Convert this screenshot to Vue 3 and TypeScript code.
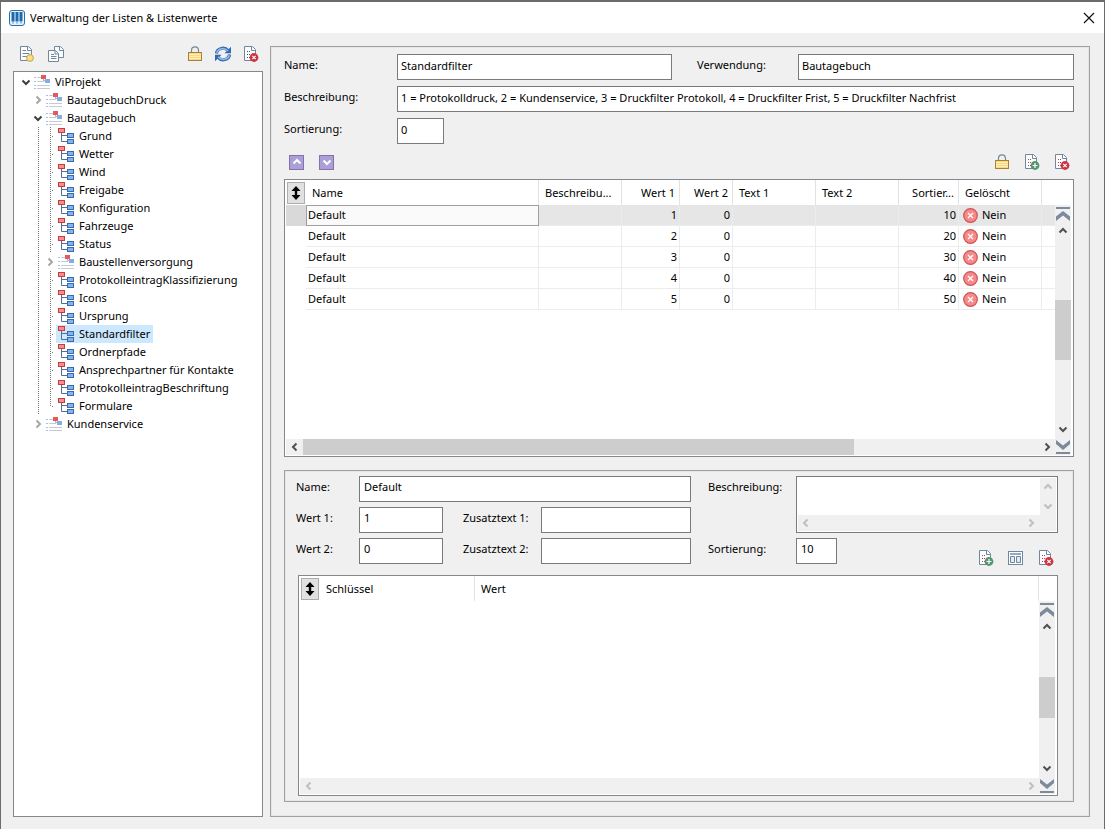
<script setup lang="ts">
import { computed, defineComponent, h, ref } from 'vue'

interface TreeNode {
  label: string
  level: number
  kind: 'group' | 'list'
  open?: boolean
}

interface ValueRow {
  name: string
  wert1: number
  wert2: number
  sort: number
  deleted: string
}

const nodes = ref<TreeNode[]>([
  { label: 'ViProjekt', level: 0, kind: 'group', open: true },
  { label: 'BautagebuchDruck', level: 1, kind: 'group', open: false },
  { label: 'Bautagebuch', level: 1, kind: 'group', open: true },
  { label: 'Grund', level: 2, kind: 'list' },
  { label: 'Wetter', level: 2, kind: 'list' },
  { label: 'Wind', level: 2, kind: 'list' },
  { label: 'Freigabe', level: 2, kind: 'list' },
  { label: 'Konfiguration', level: 2, kind: 'list' },
  { label: 'Fahrzeuge', level: 2, kind: 'list' },
  { label: 'Status', level: 2, kind: 'list' },
  { label: 'Baustellenversorgung', level: 2, kind: 'group', open: false },
  { label: 'ProtokolleintragKlassifizierung', level: 2, kind: 'list' },
  { label: 'Icons', level: 2, kind: 'list' },
  { label: 'Ursprung', level: 2, kind: 'list' },
  { label: 'Standardfilter', level: 2, kind: 'list' },
  { label: 'Ordnerpfade', level: 2, kind: 'list' },
  { label: 'Ansprechpartner für Kontakte', level: 2, kind: 'list' },
  { label: 'ProtokolleintragBeschriftung', level: 2, kind: 'list' },
  { label: 'Formulare', level: 2, kind: 'list' },
  { label: 'Kundenservice', level: 1, kind: 'group', open: false },
])

const selected = ref('Standardfilter')

// A node is shown as long as none of its ancestors is collapsed.
const visibleNodes = computed(() => {
  let hiddenBelow = Infinity
  return nodes.value.filter((node) => {
    if (node.level > hiddenBelow) return false
    hiddenBelow = node.open === false ? node.level : Infinity
    return true
  })
})

function isLast(index: number): boolean {
  const next = visibleNodes.value[index + 1]
  return !next || next.level < visibleNodes.value[index].level
}

const rows: ValueRow[] = [
  { name: 'Default', wert1: 1, wert2: 0, sort: 10, deleted: 'Nein' },
  { name: 'Default', wert1: 2, wert2: 0, sort: 20, deleted: 'Nein' },
  { name: 'Default', wert1: 3, wert2: 0, sort: 30, deleted: 'Nein' },
  { name: 'Default', wert1: 4, wert2: 0, sort: 40, deleted: 'Nein' },
  { name: 'Default', wert1: 5, wert2: 0, sort: 50, deleted: 'Nein' },
]
const activeRow = ref(0)

const list = ref({
  name: 'Standardfilter',
  usage: 'Bautagebuch',
  description:
    '1 = Protokolldruck, 2 = Kundenservice, 3 = Druckfilter Protokoll, 4 = Druckfilter Frist, 5 = Druckfilter Nachfrist',
  sort: '0',
})
const entry = ref({ name: 'Default', wert1: '1', wert2: '0', text1: '', text2: '', description: '', sort: '10' })

const chevrons: Record<string, string> = {
  up: 'M1.5 6.5 5 3 8.5 6.5',
  down: 'M1.5 3.5 5 7 8.5 3.5',
  left: 'M6.5 1.5 3 5 6.5 8.5',
  right: 'M3.5 1.5 7 5 3.5 8.5',
}

const Chevron = defineComponent({
  props: { dir: { type: String, required: true } },
  setup: (props) => () =>
    h('svg', { width: 10, height: 10, viewBox: '0 0 10 10', 'aria-hidden': 'true' }, [
      h('path', { d: chevrons[props.dir], fill: 'none', stroke: 'currentColor', 'stroke-width': 2 }),
    ]),
})

// Sheet of paper with a folded corner; the badge marks the action.
const DocIcon = defineComponent({
  props: { badge: { type: String, required: true } },
  setup: (props) => () => {
    const parts = [
      h('path', { d: 'M1.5 .5H9.5L12.5 3.5V14.5H1.5Z', fill: '#fbfcfd', stroke: '#71879b' }),
      h('path', { d: 'M8.5 .5V4.5H12.5', fill: 'none', stroke: '#71879b' }),
    ]
    if (props.badge === 'new') {
      parts.push(
        h('path', { d: 'M3.5 4.5H7M3.5 7.5H10.5M3.5 10.5H8', stroke: '#71879b' }),
        h('circle', { cx: 11, cy: 12, r: 3.4, fill: '#f9e08b', stroke: '#c9a544' }),
      )
    } else {
      const dot = props.badge === 'drop' ? '#3c5468' : '#c43c4c'
      parts.push(
        h('path', { d: 'M4 5.5H5M4 8.5H5M4 11.5H5', stroke: dot }),
        h('path', { d: 'M6 5.5H8M6 8.5H9M6 11.5H7', stroke: dot, 'stroke-dasharray': '1 1' }),
        h('circle', { cx: 11, cy: 11.5, r: 4.4, fill: props.badge === 'add' ? '#53966c' : '#cf3540' }),
        h('path', {
          d: props.badge === 'add' ? 'M8.5 11.5H13.5M11 9V14' : 'M9.3 9.8 12.7 13.2M12.7 9.8 9.3 13.2',
          stroke: '#fff',
          'stroke-width': 1.2,
        }),
      )
    }
    return h('svg', { width: 16, height: 16, viewBox: '0 0 16 16', 'aria-hidden': 'true' }, parts)
  },
})

const LockIcon = defineComponent({
  setup: () => () =>
    h('svg', { width: 16, height: 16, viewBox: '0 0 16 16', 'aria-hidden': 'true' }, [
      h('path', { d: 'M4.5 6V4.5Q4.5 .8 8 .8T11.5 4.5V6', fill: 'none', stroke: '#71879b', 'stroke-width': 1.2 }),
      h('rect', { x: 1.5, y: 6.5, width: 13, height: 8, fill: '#fbd77d', stroke: '#a8803a' }),
      h('path', { d: 'M2 8.5H14M2 10.5H14M2 12.5H14', stroke: '#fdf0bd' }),
    ]),
})

const SortIcon = defineComponent({
  setup: () => () =>
    h('svg', { width: 10, height: 14, viewBox: '0 0 10 14', 'aria-hidden': 'true' }, [
      h('path', { d: 'M5 0 9.5 5H6.2V9H9.5L5 14 .5 9H3.8V5H.5Z', fill: '#000' }),
    ]),
})

const JumpIcon = defineComponent({
  props: { end: Boolean },
  setup: (props) => () =>
    h('svg', { width: 16, height: 16, viewBox: '0 0 16 16', 'aria-hidden': 'true' }, [
      h('path', {
        d: props.end ? 'M1 14H15V16H1ZM1 2 8 7.5 15 2V6L8 12 1 6Z' : 'M1 1H15V3H1ZM1 15 8 9.5 15 15V10.5L8 5 1 10.5Z',
        fill: '#7c8a9c',
      }),
    ]),
})
</script>

<template>
  <div class="window">
    <header class="titlebar">
      <svg width="16" height="16" viewBox="0 0 16 16" aria-hidden="true">
        <rect x=".5" y=".5" width="15" height="15" rx="2.5" fill="#e8f2fa" stroke="#2470b0" />
        <path d="M2.5 2H5.5V11L4 14 2.5 11ZM6.5 2H9.5V11L8 14 6.5 11ZM10.5 2H13.5V11L12 14 10.5 11Z" fill="#1e69aa" />
        <path d="M4 11V13M8 11V13M12 11V13" stroke="#e8f2fa" />
      </svg>
      <h1>Verwaltung der Listen &amp; Listenwerte</h1>
      <button type="button" class="close" aria-label="Schließen">
        <svg width="12" height="12" viewBox="0 0 12 12" aria-hidden="true">
          <path d="M1 1 11 11M11 1 1 11" stroke="#111" stroke-width="1.2" />
        </svg>
      </button>
    </header>

    <main class="body">
      <aside class="side">
        <div class="toolbar">
          <button type="button" class="tool" aria-label="Neue Liste"><DocIcon badge="new" /></button>
          <button type="button" class="tool copy" aria-label="Liste kopieren">
            <svg width="16" height="16" viewBox="0 0 16 16" aria-hidden="true">
              <path d="M6.5 .5H12.5L15.5 3.5V11.5H6.5Z" fill="#fbfcfd" stroke="#71879b" />
              <path d="M11.5 .5V4.5H15.5" fill="none" stroke="#71879b" />
              <path d="M.5 4.5H7.5L10.5 7.5V15.5H.5Z" fill="#fbfcfd" stroke="#71879b" />
              <path d="M7 4.5V8H10.5M3 8.5H6M3 10.5H8.5M3 12.5H8.5" fill="none" stroke="#71879b" />
            </svg>
          </button>
          <span class="spacer"></span>
          <button type="button" class="tool" aria-label="Sperren"><LockIcon /></button>
          <button type="button" class="tool" aria-label="Aktualisieren">
            <svg width="18" height="16" viewBox="0 0 18 16" aria-hidden="true">
              <path d="M2.5 7.5C3 2 10.5 .5 14 4.5M15.5 8.5C15 14 7.5 15.5 4 11.5" fill="none" stroke="#3668ad" stroke-width="3.2" />
              <path d="M17 .8V7.2H10.5ZM1 15.2V8.8H7.5Z" fill="#3668ad" />
              <path d="M2.7 6.8C4 2.2 10.5 1.2 14 5M15.3 9.2C14 13.8 7.5 14.8 4 11" fill="none" stroke="#8dbbe9" stroke-width="1.6" />
            </svg>
          </button>
          <button type="button" class="tool" aria-label="Liste löschen"><DocIcon badge="drop" /></button>
        </div>

        <ul class="tree" role="tree" aria-label="Listen">
          <li
            v-for="(node, i) in visibleNodes"
            :key="node.label"
            class="node"
            role="treeitem"
            :aria-level="node.level + 1"
            :aria-expanded="node.open"
            :aria-selected="node.label === selected"
          >
            <span v-if="node.level > 0" class="step"></span>
            <span v-if="node.level > 1" class="step line"></span>
            <button
              v-if="node.kind === 'group'"
              type="button"
              class="step toggle"
              :class="{ closed: !node.open }"
              :aria-label="node.label + ' auf- oder zuklappen'"
              @click="node.open = !node.open"
            >
              <Chevron :dir="node.open ? 'down' : 'right'" />
            </button>
            <span v-else class="step line branch" :class="{ last: isLast(i) }"></span>
            <button type="button" class="item" :class="{ selected: node.label === selected }" @click="selected = node.label">
              <svg v-if="node.kind === 'group'" width="16" height="16" viewBox="0 0 16 16" aria-hidden="true">
                <path d="M0 3.5H2M0 7.5H2M0 11.5H2M0 14.5H2" stroke="#a9bfe6" />
                <path d="M3 3.5H7M3 7.5H10M3 11.5H16M3 14.5H16" stroke="#c3ccd4" />
                <path d="M9.5 4V6.5H12" fill="none" stroke="#b9a5b0" />
                <rect x="7" y="1" width="5" height="4" fill="#e3595e" />
                <rect x="11" y="5" width="5" height="4" fill="#81ade8" />
              </svg>
              <svg v-else width="16" height="16" viewBox="0 0 16 16" aria-hidden="true">
                <path d="M3.5 4V13.5H9M3.5 7.5H9" fill="none" stroke="#53708f" />
                <rect x=".5" y=".5" width="6" height="4" fill="#f98d8d" stroke="#c83c3f" />
                <rect x="9.5" y="5.5" width="6" height="4" fill="#82b4f2" stroke="#3b69ad" />
                <rect x="9.5" y="11.5" width="6" height="4" fill="#82b4f2" stroke="#3b69ad" />
              </svg>
              <span>{{ node.label }}</span>
            </button>
          </li>
        </ul>
      </aside>

      <section class="panel outer">
        <form class="list-form" @submit.prevent>
          <label for="list-name">Name:</label>
          <input id="list-name" v-model="list.name" type="text" />
          <label for="list-usage" class="second">Verwendung:</label>
          <input id="list-usage" v-model="list.usage" type="text" />
          <label for="list-desc">Beschreibung:</label>
          <input id="list-desc" v-model="list.description" type="text" class="wide" />
          <label for="list-sort">Sortierung:</label>
          <input id="list-sort" v-model="list.sort" type="text" class="short" />
        </form>

        <div class="toolbar actions">
          <button type="button" class="move" aria-label="Nach oben"><Chevron dir="up" /></button>
          <button type="button" class="move" aria-label="Nach unten"><Chevron dir="down" /></button>
          <span class="spacer"></span>
          <button type="button" class="tool" aria-label="Sperren"><LockIcon /></button>
          <button type="button" class="tool" aria-label="Wert hinzufügen"><DocIcon badge="add" /></button>
          <button type="button" class="tool" aria-label="Wert löschen"><DocIcon badge="delete" /></button>
        </div>

        <div class="grid-box values">
          <div class="grid-main">
            <div class="grid-view">
              <table>
                <colgroup>
                  <col class="w-mark" />
                  <col class="w-name" />
                  <col class="w-text" />
                  <col class="w-wert1" />
                  <col class="w-wert2" />
                  <col class="w-text" />
                  <col class="w-text" />
                  <col class="w-sort" />
                  <col class="w-text" />
                  <col />
                </colgroup>
                <thead>
                  <tr>
                    <th class="mark"><button type="button" class="sorter" aria-label="Sortieren"><SortIcon /></button></th>
                    <th scope="col">Name</th>
                    <th scope="col">Beschreibu...</th>
                    <th scope="col" class="num">Wert 1</th>
                    <th scope="col" class="num">Wert 2</th>
                    <th scope="col">Text 1</th>
                    <th scope="col">Text 2</th>
                    <th scope="col" class="num">Sortier...</th>
                    <th scope="col">Gelöscht</th>
                    <th class="rest"></th>
                  </tr>
                </thead>
                <tbody>
                  <tr v-for="(row, i) in rows" :key="row.sort" :class="{ active: i === activeRow }" @click="activeRow = i">
                    <td class="mark"></td>
                    <td class="name">{{ row.name }}</td>
                    <td></td>
                    <td class="num">{{ row.wert1 }}</td>
                    <td class="num">{{ row.wert2 }}</td>
                    <td></td>
                    <td></td>
                    <td class="num">{{ row.sort }}</td>
                    <td>
                      <span class="flag">
                        <svg width="15" height="15" viewBox="0 0 15 15" aria-hidden="true">
                          <circle cx="7.5" cy="7.5" r="6.8" fill="#f58a8a" stroke="#d05055" stroke-width="1.2" />
                          <path d="M5 5 10 10M10 5 5 10" stroke="#fff" stroke-width="1.2" />
                        </svg>
                        {{ row.deleted }}
                      </span>
                    </td>
                    <td class="rest"></td>
                  </tr>
                </tbody>
              </table>
            </div>
            <div class="hscroll">
              <button type="button" aria-label="Nach links"><Chevron dir="left" /></button>
              <span class="track"><span class="thumb"></span></span>
              <button type="button" aria-label="Nach rechts"><Chevron dir="right" /></button>
            </div>
          </div>
          <div class="vscroll">
            <button type="button" class="jump" aria-label="Zum Anfang"><JumpIcon /></button>
            <button type="button" aria-label="Nach oben"><Chevron dir="up" /></button>
            <span class="track"><span class="thumb"></span></span>
            <button type="button" aria-label="Nach unten"><Chevron dir="down" /></button>
            <button type="button" class="jump" aria-label="Zum Ende"><JumpIcon end /></button>
          </div>
        </div>

        <section class="panel inner">
          <form class="entry-form" @submit.prevent>
            <label for="entry-name">Name:</label>
            <input id="entry-name" v-model="entry.name" type="text" class="name-field" />
            <label for="entry-desc" class="third">Beschreibung:</label>
            <div class="memo">
              <textarea id="entry-desc" v-model="entry.description"></textarea>
              <div class="memo-v" aria-hidden="true"><Chevron dir="up" /><Chevron dir="down" /></div>
              <div class="memo-h" aria-hidden="true"><Chevron dir="left" /><Chevron dir="right" /></div>
            </div>
            <label for="entry-w1" class="first">Wert 1:</label>
            <input id="entry-w1" v-model="entry.wert1" type="text" />
            <label for="entry-t1" class="second">Zusatztext 1:</label>
            <input id="entry-t1" v-model="entry.text1" type="text" />
            <label for="entry-w2" class="first">Wert 2:</label>
            <input id="entry-w2" v-model="entry.wert2" type="text" />
            <label for="entry-t2" class="second">Zusatztext 2:</label>
            <input id="entry-t2" v-model="entry.text2" type="text" />
            <label for="entry-sort" class="third">Sortierung:</label>
            <div class="sort-line">
              <input id="entry-sort" v-model="entry.sort" type="text" class="short" />
              <span class="spacer"></span>
              <button type="button" class="tool" aria-label="Eintrag hinzufügen"><DocIcon badge="add" /></button>
              <button type="button" class="tool" aria-label="Ansicht">
                <svg width="16" height="16" viewBox="0 0 16 16" aria-hidden="true">
                  <rect x=".5" y="1.5" width="14" height="13" fill="#fff" stroke="#71879b" />
                  <path d="M2 4H13" stroke="#8fa9c8" stroke-width="2" />
                  <path d="M2.5 6.5H6.5V12.5H2.5ZM8.5 6.5H12.5V12.5H8.5Z" fill="#dcebf5" stroke="#71879b" />
                </svg>
              </button>
              <button type="button" class="tool" aria-label="Eintrag löschen"><DocIcon badge="delete" /></button>
            </div>
          </form>

          <div class="grid-box entries">
            <div class="grid-main">
              <div class="grid-view">
                <table>
                  <colgroup>
                    <col class="w-mark" />
                    <col class="w-key" />
                    <col />
                  </colgroup>
                  <thead>
                    <tr>
                      <th class="mark"><button type="button" class="sorter" aria-label="Sortieren"><SortIcon /></button></th>
                      <th scope="col">Schlüssel</th>
                      <th scope="col">Wert</th>
                    </tr>
                  </thead>
                </table>
              </div>
              <div class="hscroll idle">
                <button type="button" aria-label="Nach links"><Chevron dir="left" /></button>
                <span class="track"></span>
                <button type="button" aria-label="Nach rechts"><Chevron dir="right" /></button>
              </div>
            </div>
            <div class="vscroll">
              <button type="button" class="jump" aria-label="Zum Anfang"><JumpIcon /></button>
              <button type="button" aria-label="Nach oben"><Chevron dir="up" /></button>
              <span class="track"><span class="thumb"></span></span>
              <button type="button" aria-label="Nach unten"><Chevron dir="down" /></button>
              <button type="button" class="jump" aria-label="Zum Ende"><JumpIcon end /></button>
            </div>
          </div>
        </section>
      </section>
    </main>
  </div>
</template>

<style>
html,
body {
  margin: 0;
  background: #f0f0f0;
}
</style>

<style scoped>
* {
  box-sizing: border-box;
}

.window {
  display: flex;
  flex-direction: column;
  min-height: 100vh;
  border: 1px solid #6b6b6b;
  border-top-width: 2px;
  border-bottom: 0;
  background: #f0f0f0;
  color: #000;
  font: 11px/16px 'Noto Sans', 'Open Sans', sans-serif;
}

button {
  display: flex;
  align-items: center;
  justify-content: center;
  flex: none;
  padding: 0;
  border: 0;
  background: none;
  color: inherit;
  font: inherit;
}

svg {
  display: block;
  flex: none;
}

.spacer {
  flex: 1;
}

.titlebar {
  display: flex;
  align-items: center;
  gap: 5px;
  height: 31px;
  padding: 0 7px 0 8px;
  background: #fff;
}

.titlebar h1 {
  flex: 1;
  margin: 0;
  font: inherit;
}

.close {
  width: 16px;
  height: 16px;
}

.body {
  display: flex;
  flex: 1;
  gap: 7px;
  padding: 13px 14px 12px 12px;
}

.side {
  display: flex;
  flex-direction: column;
  flex: none;
  width: 250px;
}

.toolbar {
  display: flex;
  align-items: center;
}

.side .toolbar {
  gap: 11px;
  padding: 0 4px 0 6px;
  margin-bottom: 9px;
}

.tool.copy {
  margin-left: 2px;
}

.tree {
  flex: 1;
  margin: 0;
  padding: 1px 6px;
  border: 1px solid #828790;
  background: #fff;
  list-style: none;
}

.node {
  display: flex;
  height: 18px;
}

.step {
  flex: none;
  width: 12px;
  height: 18px;
}

.line {
  background: repeating-linear-gradient(#777 0 1px, transparent 1px 2px) 6px 0 / 1px 100% no-repeat;
}

.line.last {
  background-size: 1px 50%;
}

.branch::after {
  content: '';
  display: block;
  width: 1px;
  height: 1px;
  margin: 9px 0 0 8px;
  background: #777;
}

.toggle {
  color: #404040;
}

.toggle.closed {
  color: #a6a6a6;
}

.item {
  gap: 5px;
  padding: 0 3px 0 2px;
  white-space: nowrap;
}

.item.selected {
  background: #cce8ff;
}

.panel {
  display: flex;
  flex-direction: column;
  min-width: 0;
  border: 1px solid #a0a0a0;
  box-shadow: inset 0 0 0 1px #e6e6e6;
}

.outer {
  flex: 1;
  padding: 7px 15px 14px 13px;
}

.list-form {
  display: grid;
  grid-template-columns: 113px minmax(0, 275fr) 126px minmax(0, 276fr);
  grid-auto-rows: 26px;
  row-gap: 6px;
}

label {
  padding-top: 3px;
}

.list-form .second {
  padding-left: 25px;
}

input,
textarea {
  width: 100%;
  min-width: 0;
  margin: 0;
  border: 1px solid #7a7a7a;
  border-radius: 0;
  outline: 0;
  background: #fff;
  color: #000;
  font: inherit;
}

input {
  height: 26px;
  padding: 0 3px 4px;
}

.wide {
  grid-column: span 3;
}

.list-form .short {
  width: 47px;
}

.actions {
  gap: 14px;
  margin: 10px 4px 9px 5px;
}

.move {
  width: 15px;
  height: 15px;
  border: 1px solid #8a6fa8;
  background: #a9a0d8;
  color: #fff;
}

.move + .move {
  margin-left: 1px;
}

.grid-box {
  display: flex;
  min-height: 0;
  padding: 0 2px 1px 1px;
  border: 1px solid #828790;
  background: #fff;
}

.values {
  flex: 1 1 278px;
}

.grid-main {
  display: flex;
  flex-direction: column;
  flex: 1;
  min-width: 0;
}

.grid-view {
  flex: 1;
}

table {
  width: 100%;
  border-collapse: separate;
  border-spacing: 0;
  table-layout: fixed;
}

.w-mark {
  width: 20px;
}

.w-name {
  width: 233px;
}

.w-text {
  width: 83px;
}

.w-wert1 {
  width: 58px;
}

.w-wert2 {
  width: 53px;
}

.w-sort {
  width: 60px;
}

.w-key {
  width: 155px;
}

th,
td {
  overflow: hidden;
  padding: 0 2px;
  border-right: 1px solid #ececec;
  font-weight: 400;
  text-align: left;
  white-space: nowrap;
}

th {
  height: 25px;
  padding: 0 6px;
  border-color: #e2e2e2;
}

td {
  height: 21px;
  border-bottom: 1px solid #ececec;
}

.num {
  text-align: right;
}

th.num {
  padding-right: 4px;
}

th.mark,
td.mark {
  padding: 0 1px;
  border-right: 0;
}

td.mark {
  border-bottom: 0;
}

.rest {
  border-right: 0;
}

.sorter {
  width: 18px;
  height: 22px;
  border: 1px solid #adadad;
  background: #e1e1e1;
}

.active td {
  background: #e6e6e6;
}

.active td.mark {
  background: #d9d9d9;
}

.active td.name {
  outline: 1px solid #a0a0a0;
  outline-offset: -1px;
  background: #fafafa;
}

.flag {
  display: flex;
  align-items: center;
  gap: 4px;
  padding-left: 2px;
}

.hscroll {
  display: flex;
  height: 16px;
  background: #f0f0f0;
  color: #505050;
}

.hscroll button {
  width: 17px;
}

.idle {
  color: #bfbfbf;
}

.track {
  display: flex;
  flex: 1;
}

.hscroll .thumb {
  width: 75%;
  background: #cdcdcd;
}

.vscroll {
  display: flex;
  flex-direction: column;
  flex: none;
  width: 16px;
  margin-top: 25px;
  background: #f0f0f0;
  color: #505050;
}

.vscroll button {
  height: 16px;
}

.vscroll .jump {
  height: 18px;
}

.vscroll .track {
  align-items: center;
}

.vscroll .thumb {
  width: 100%;
  height: 33%;
  background: #cdcdcd;
}

.inner {
  flex: 1 1 332px;
  margin-top: 13px;
  padding: 5px 15px 5px 13px;
}

.entry-form {
  display: grid;
  grid-template-columns: 61px minmax(0, 84fr) 98px minmax(0, 150fr) 105px minmax(0, 262fr);
  grid-template-rows: 26px 26px 28px;
  row-gap: 5px;
  margin-bottom: 9px;
}

.entry-form > label {
  margin-left: -2px;
}

.entry-form input {
  padding: 0 4px 6px;
}

.entry-form .name-field {
  grid-column: span 3;
}

.entry-form .first {
  grid-column: 1;
}

.entry-form .second {
  padding-left: 22px;
}

.entry-form .third {
  padding-left: 19px;
}

.memo {
  display: grid;
  grid-template-columns: minmax(0, 1fr) 16px;
  grid-template-rows: minmax(0, 1fr) 16px;
  grid-row: span 2;
  grid-column: 6;
  padding: 1px;
  border: 1px solid #7a7a7a;
  background: #fff;
  color: #bfbfbf;
}

.memo textarea {
  height: 100%;
  border: 0;
  resize: none;
  overflow: hidden;
}

.memo-v {
  display: flex;
  flex-direction: column;
  align-items: center;
  justify-content: space-around;
  background: #f0f0f0;
}

.memo-h {
  display: flex;
  grid-column: span 2;
  align-items: center;
  justify-content: space-between;
  padding: 0 20px 0 3px;
  background: #f0f0f0;
}

.sort-line {
  display: flex;
  align-items: flex-end;
  gap: 14px;
  padding-right: 4px;
}

.sort-line .short {
  align-self: flex-start;
  width: 41px;
}

.entries {
  flex: 1;
}
</style>
